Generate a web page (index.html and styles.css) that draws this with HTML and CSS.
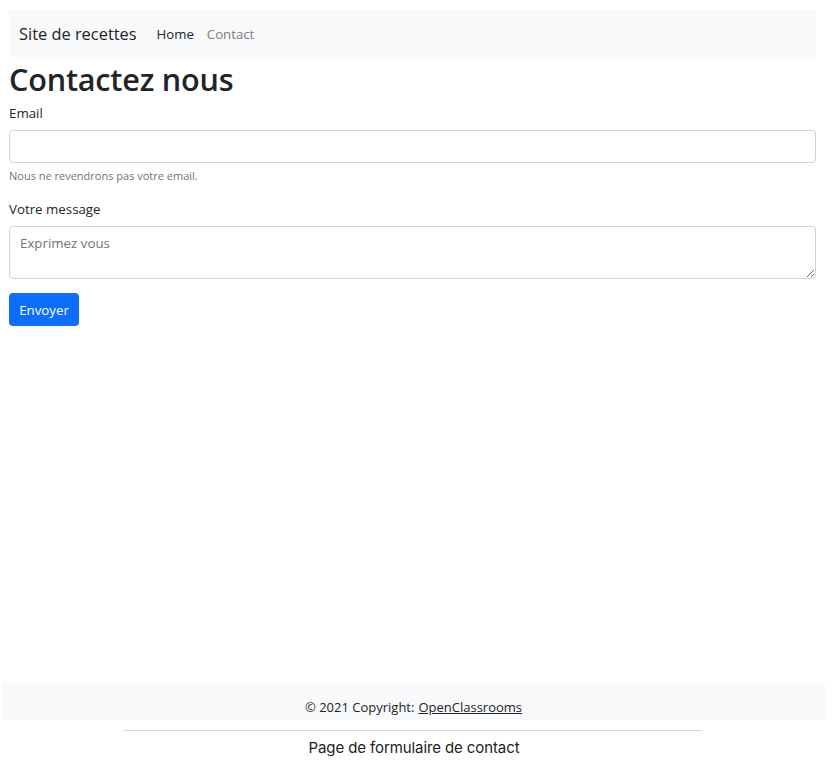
FILE: index.html
```html
<!DOCTYPE html>
<html lang="fr">
<head>
<meta charset="utf-8">
<title>Contactez nous</title>
<link rel="stylesheet" href="styles.css">
</head>
<body>
<div class="shot">
  <div class="app">
    <nav class="navbar">
      <span class="brand">Site de recettes</span>
      <a class="nav-link active" href="#">Home</a>
      <a class="nav-link" href="#">Contact</a>
    </nav>
    <h1 class="title">Contactez nous</h1>
    <form class="form">
      <label class="label">Email</label>
      <input class="control" type="email">
      <div class="help">Nous ne revendrons pas votre email.</div>
      <label class="label label-msg">Votre message</label>
      <textarea class="control area" placeholder="Exprimez vous"></textarea>
      <button class="btn" type="button">Envoyer</button>
    </form>
  </div>
  <footer class="footer">© 2021 Copyright: <a href="#">OpenClassrooms</a></footer>
  <div class="caption">
    <div class="rule"></div>
    <div class="caption-text">Page de formulaire de contact</div>
  </div>
</div>
</body>
</html>
```

FILE: styles.css
```css
html, body {
  margin: 0;
  padding: 0;
  background: #fff;
}
.shot {
  width: 838px;
  height: 774px;
  display: flex;
  flex-direction: column;
  font-family: "Open Sans", "Noto Sans", sans-serif;
  color: #212529;
}
.app {
  flex: 1;
  padding: 10px 22px 0 9px;
}
.navbar {
  background: #f8f9fa;
  height: 47px;
  display: flex;
  align-items: center;
  padding-left: 10px;
}
.brand {
  font-size: 16.4px;
  color: #212529;
  margin-right: 20px;
}
.nav-link {
  font-size: 13.2px;
  color: #7a7d80;
  text-decoration: none;
  margin-right: 13px;
}
.nav-link.active {
  color: #212529;
}
.title {
  margin: 2px 0 0 0;
  font-size: 30.6px;
  font-weight: 600;
  line-height: 40px;
  letter-spacing: -0.2px;
}
.form {
  display: flex;
  flex-direction: column;
  align-items: flex-start;
}
.label {
  font-size: 13.3px;
  line-height: 20px;
  margin-top: 4px;
  margin-bottom: 7px;
}
.label-msg {
  margin-top: 16px;
  margin-bottom: 7px;
}
.control {
  box-sizing: border-box;
  width: 807px;
  height: 33px;
  border: 1px solid #ced4da;
  border-radius: 4px;
  margin: 0;
  font-family: inherit;
  font-size: 13.3px;
  padding: 7px 10px;
  color: #212529;
}
.area {
  height: 53px;
  resize: vertical;
  display: block;
}
.area::placeholder {
  color: #6c757d;
}
.help {
  font-size: 11px;
  color: #6c757d;
  margin-top: 5px;
}
.btn {
  margin-top: 14px;
  background: #0d6efd;
  color: #fff;
  border: none;
  border-radius: 4px;
  height: 33px;
  width: 70px;
  font-family: inherit;
  font-size: 13.3px;
  padding: 0;
}
.footer {
  margin: 0 13px 0 2px;
  height: 37px;
  background: #f8f9fa;
  display: flex;
  align-items: flex-end;
  justify-content: center;
  padding-bottom: 4px;
  box-sizing: border-box;
  font-size: 13px;
  color: #212529;
}
.footer a {
  color: #212529;
  margin-left: 4px;
}
.caption {
  height: 54px;
  display: flex;
  flex-direction: column;
  align-items: center;
}
.rule {
  margin-top: 10px;
  width: 578px;
  margin-left: -12px;
  border-top: 1px solid #d6d6d6;
}
.caption-text {
  font-family: Inter, "Noto Sans", sans-serif;
  font-size: 15px;
  color: #222;
  margin-top: 7px;
  margin-left: -10px;
  letter-spacing: -0.1px;
}
```
